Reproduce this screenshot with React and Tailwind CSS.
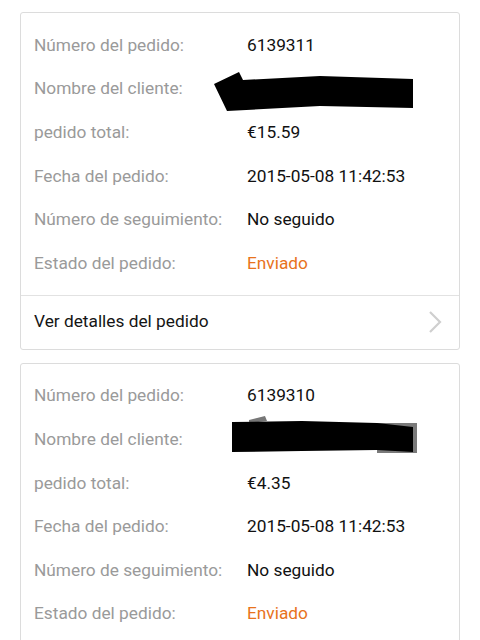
import React from "react";

const orders = [
  { id: "6139311", total: "€15.59", date: "2015-05-08 11:42:53", blot: 1 },
  { id: "6139310", total: "€4.35", date: "2015-05-08 11:42:53", blot: 2 },
];

const Blot = ({ kind }) =>
  kind === 1 ? (
    <svg className="absolute left-[-33px] top-[-4px]" width="210" height="50" viewBox="0 0 210 50">
      <polygon points="0,13 25,1 29,9 106,5 199,8 199,37 106,35 13,40" fill="#000" />
    </svg>
  ) : (
    <svg className="absolute left-[-15px] top-[-13px]" width="200" height="50" viewBox="0 0 200 50">
      <polygon points="17,7 33,3 35,8 17,10" fill="#777" />
      <polygon points="145,10 185,10 185,40 145,40" fill="#7a7a7a" />
      <polygon points="0,9 70,8 145,10 181,14 181,39 145,37 70,38 0,39" fill="#000" />
    </svg>
  );

const Row = ({ label, children }) => (
  <div className="flex items-center h-[43.6px]">
    <div className="w-[226px] pl-[13px] text-[#9a9a9a]">{label}</div>
    <div className="relative flex-1">{children}</div>
  </div>
);

const OrderCard = ({ order }) => (
  <div className="border border-[#dcdcdc] rounded-[3px] bg-white">
    <div className="pt-[11px] pb-[9px]">
      <Row label="Número del pedido:">
        <span className="text-[#111]">{order.id}</span>
      </Row>
      <Row label="Nombre del cliente:">
        <span className="inline-block h-[20px]" />
        <Blot kind={order.blot} />
      </Row>
      <Row label="pedido total:">
        <span className="text-[#111]">{order.total}</span>
      </Row>
      <Row label="Fecha del pedido:">
        <span className="text-[#111]">{order.date}</span>
      </Row>
      <Row label="Número de seguimiento:">
        <span className="text-[#111]">No seguido</span>
      </Row>
      <Row label="Estado del pedido:">
        <span className="text-[#e8731c]">Enviado</span>
      </Row>
    </div>
    <div className="border-t border-[#e2e2e2] h-[54px] flex items-center justify-between pl-[13px] pr-[17px]">
      <span className="text-[#151515]">Ver detalles del pedido</span>
      <svg width="14" height="22" viewBox="0 0 14 22">
        <polyline points="2,1 12,11 2,21" fill="none" stroke="#cfcfcf" strokeWidth="2.2" />
      </svg>
    </div>
  </div>
);

export default function App() {
  return (
    <div className="w-[480px] h-[640px] overflow-hidden bg-white px-[20px] pt-[12px] flex flex-col gap-[13px] text-[17.3px] font-['Roboto',sans-serif]">
      {orders.map((o) => (
        <OrderCard key={o.id} order={o} />
      ))}
    </div>
  );
}
